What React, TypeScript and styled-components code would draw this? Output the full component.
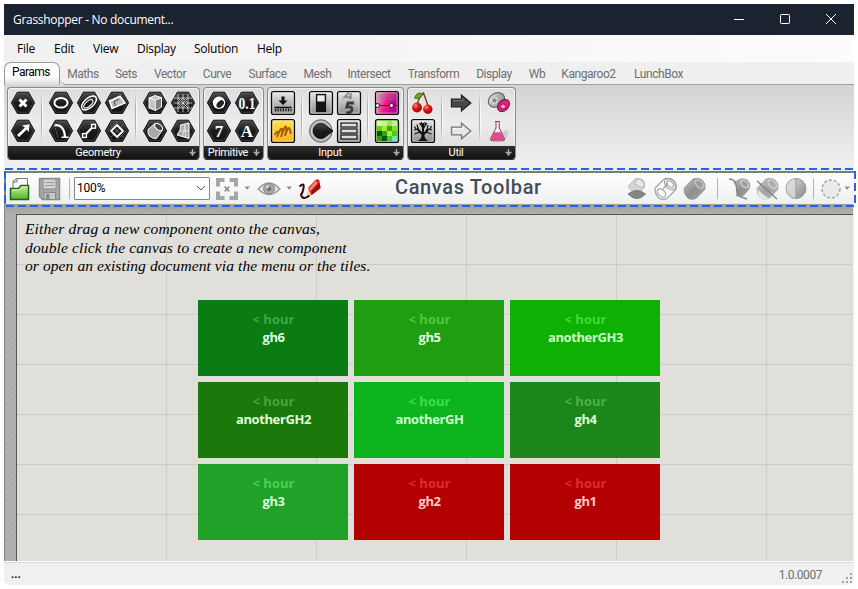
import React from 'react';
import styled, { createGlobalStyle } from 'styled-components';

const GlobalStyle = createGlobalStyle`
  *, *::before, *::after { box-sizing: border-box; }
  body { margin: 0; background: #fff; overflow: hidden; }
  svg { display: block; flex: none; }
`;

const ui = '"Open Sans", "Noto Sans", sans-serif';
const narrow = 'Roboto, "Liberation Sans", sans-serif';

const AppWindow = styled.div`
  width: 850px;
  height: 581px;
  margin: 4px;
  display: flex;
  flex-direction: column;
  background: #efefef;
  border-radius: 0 0 7px 7px;
  font-family: ${ui};
`;

const TitleBar = styled.header`
  height: 31px;
  flex: none;
  display: flex;
  align-items: center;
  justify-content: space-between;
  padding: 0 17px 0 9px;
  background: #1c2330;
  color: #fff;
`;

const Title = styled.span`
  font-size: 12px;
  letter-spacing: -0.3px;
  white-space: nowrap;
`;

const WindowControls = styled.div`
  display: flex;
  gap: 34px;
`;

const MenuBar = styled.nav`
  height: 27px;
  flex: none;
  display: flex;
  align-items: center;
  padding-left: 13px;
  gap: 19px;
  background: linear-gradient(90deg, #f0f0f0, #fcfcfc);
`;

const MenuItem = styled.span<{ $w: number }>`
  width: ${p => p.$w}px;
  font-size: 12px;
  letter-spacing: -0.25px;
  white-space: nowrap;
  color: #000;
`;

const TabStrip = styled.nav`
  height: 23px;
  flex: none;
  display: flex;
  align-items: stretch;
  background: #efefef;
`;

const ActiveTab = styled.div`
  width: 56px;
  flex: none;
  border: 1px solid #999;
  border-bottom: 0;
  border-radius: 7px 7px 0 0;
  background: linear-gradient(#fff 60%, #dcdcdc);
  font: 12px/19px ${narrow};
  letter-spacing: -0.5px;
  padding-right: 2px;
  text-align: center;
  color: #000;
`;

const TabLine = styled.div`
  flex: 1;
  display: flex;
  border-bottom: 1px solid #a0a0a0;
  border-bottom-left-radius: 6px;
`;

const Tab = styled.span<{ $w: number }>`
  width: ${p => p.$w}px;
  flex: none;
  font: 12px/24px ${narrow};
  letter-spacing: -0.45px;
  color: #707070;
  text-align: center;
  white-space: nowrap;
`;

const Ribbon = styled.section`
  height: 86px;
  flex: none;
  display: flex;
  align-items: flex-start;
  gap: 3px;
  padding: 2px 3px;
  background: linear-gradient(#d3d3d3, #efefef 78px);
`;

const Panel = styled.div`
  height: 73px;
  display: flex;
  flex-direction: column;
  border: 1px solid #8a8a8a;
  border-bottom-color: #333;
  border-radius: 4px;
  background: linear-gradient(#dedede, #ececec 50%, #d8d8d8);
  box-shadow: inset 0 0 0 1px #f3f3f3;
  overflow: hidden;
`;

const PanelBody = styled.div`
  height: 58px;
  display: flex;
  gap: 10px;
  padding: 1px 2px 0 1px;
`;

const IconGroup = styled.div<{ $cols: number; $divided: boolean }>`
  display: grid;
  grid-template-columns: repeat(${p => p.$cols}, 28px);
  grid-template-rows: 28px 28px;
  position: relative;
  &::before {
    content: '';
    display: ${p => (p.$divided ? 'block' : 'none')};
    position: absolute;
    left: -6px;
    top: 2px;
    width: 2px;
    height: 52px;
    background: linear-gradient(90deg, #b0b0b0 50%, #fafafa 50%);
    mask-image: linear-gradient(transparent, #000 30%, #000 70%, transparent);
  }
`;

const PanelLabel = styled.div`
  flex: 1;
  display: flex;
  align-items: center;
  padding: 0 2px 0 0;
  background: linear-gradient(#2e2e2e, #121212);
  color: #fff;
  font: 11px/13px ${narrow};
`;

const LabelText = styled.span`
  flex: 1;
  min-width: 0;
  text-align: center;
  letter-spacing: -0.3px;
`;

const ToolBar = styled.section`
  height: 33px;
  flex: none;
  display: flex;
  align-items: center;
  border-top: 2px solid #7b7b7b;
  border-left: 2px solid #888;
  background: linear-gradient(#fff, #efefef);
  position: relative;
`;

const ToolGroup = styled.div<{ $w: number }>`
  width: ${p => p.$w}px;
  flex: none;
  display: flex;
  align-items: center;
`;

const Divider = styled.i<{ $before: number; $after: number }>`
  width: 1px;
  height: 21px;
  margin: 0 ${p => p.$after}px 0 ${p => p.$before}px;
  background: #b4b4b4;
`;

const ZoomBox = styled.div`
  width: 136px;
  height: 23px;
  margin-right: 5px;
  display: flex;
  align-items: center;
  justify-content: space-between;
  padding: 0 3px 2px 2px;
  border: 1px solid #858585;
  border-radius: 1px;
  background: #fff;
  font: 12px ${narrow};
  letter-spacing: -0.2px;
  color: #000;
`;

const Heading = styled.h1`
  margin: 0;
  width: 230px;
  font: 500 20px/24px Roboto, sans-serif;
  letter-spacing: 0.62px;
  color: #434c59;
  padding-bottom: 3px;
  white-space: nowrap;
`;

const horizontalDash = 'repeating-linear-gradient(90deg, #2563eb 0 8px, transparent 8px 12px)';
const verticalDash = 'repeating-linear-gradient(#2563eb 0 8px, transparent 8px 12px)';

const Highlight = styled.div`
  position: absolute;
  inset: -5px -2px -3px -2px;
  pointer-events: none;
  background:
    ${horizontalDash} 1px 0 / 100% 2px no-repeat,
    ${horizontalDash} 2px 100% / 100% 2px no-repeat,
    ${verticalDash} 0 3px / 2px 100% no-repeat,
    ${verticalDash} 100% 3px / 2px 100% no-repeat;
`;

const Canvas = styled.main`
  height: 357px;
  flex: none;
  width: 849px;
  padding: 10px 0 0 11px;
  border-left: 1px solid #888;
  background:
    linear-gradient(rgba(90, 90, 85, 0.22), transparent 10px),
    repeating-linear-gradient(135deg, #b4b2ae 0 2px, #aeaca8 2px 4px);
  box-shadow: inset 1px 0 0 #aaa;
`;

const Paper = styled.div`
  height: 347px;
  display: flex;
  flex-direction: column;
  border-top: 1px solid #555;
  border-left: 1px solid #555;
  padding: 5px 0 0 8px;
  background:
    repeating-linear-gradient(90deg, transparent 0 149px, #cdccc7 149px 150px),
    repeating-linear-gradient(transparent 0 49px, #cdccc7 49px 50px),
    #e0dfda;
`;

const Hint = styled.p`
  margin: 0;
  height: 80px;
  font: italic 15.5px/18.6px "Liberation Serif", serif;
  color: #000;
`;

const HintLine = styled.span<{ $track: number }>`
  display: block;
  letter-spacing: ${p => p.$track}px;
  white-space: nowrap;
`;

const Tiles = styled.div`
  display: grid;
  grid-template-columns: repeat(3, 150px);
  grid-auto-rows: 76px;
  gap: 6px;
  margin-left: 173px;
`;

const Tile = styled.div<{ $bg: string }>`
  background: ${p => p.$bg};
  padding: 10px 0 0 1px;
  text-align: center;
  font: bold 13px/18px "Open Sans", "Noto Sans", sans-serif;
`;

const Age = styled.div<{ $fg: string }>`
  color: ${p => p.$fg};
`;

const FileName = styled.div<{ $fg: string }>`
  color: ${p => p.$fg};
  letter-spacing: -0.4px;
`;

const StatusBar = styled.footer`
  flex: 1;
  display: flex;
  align-items: center;
  justify-content: space-between;
  padding: 2px 1px 0 7px;
  border-top: 1px solid #fff;
  box-shadow: inset 0 1px 0 #d9d9d9;
  border-radius: 0 0 7px 7px;
  background: #f0f0f0;
`;

const StatusText = styled.span`
  font: bold 11px ${narrow};
  color: #001;
`;

const Version = styled.span`
  display: flex;
  gap: 18px;
  font: 12px/20px ${narrow};
  letter-spacing: -0.45px;
  color: #6e6e6e;
`;

const HiddenDefs = styled.svg`
  position: absolute;
`;

/* ---------- ribbon icons ---------- */

const Defs = () => (
  <HiddenDefs width="0" height="0">
    <defs>
      <linearGradient id="hex" x1="0" y1="0" x2="0" y2="1">
        <stop offset="0" stopColor="#4a4a4a" /><stop offset=".5" stopColor="#1c1c1c" /><stop offset="1" stopColor="#111" />
      </linearGradient>
      <linearGradient id="key" x1="0" y1="0" x2="0" y2="1">
        <stop offset="0" stopColor="#e9e9e9" /><stop offset="1" stopColor="#8c8c8c" />
      </linearGradient>
      <linearGradient id="amber" x1="0" y1="0" x2="0" y2="1">
        <stop offset="0" stopColor="#ffe14a" /><stop offset="1" stopColor="#ffb31a" />
      </linearGradient>
      <linearGradient id="pink" x1="0" y1="0" x2="1" y2="0.3">
        <stop offset="0" stopColor="#f0c4dc" /><stop offset=".55" stopColor="#f0188a" /><stop offset="1" stopColor="#b0009a" />
      </linearGradient>
      <linearGradient id="steel" x1="0" y1="0" x2="1" y2="1">
        <stop offset="0" stopColor="#e4e4e4" /><stop offset="1" stopColor="#858585" />
      </linearGradient>
      <linearGradient id="steelDark" x1="0" y1="0" x2="1" y2="1">
        <stop offset="0" stopColor="#c4c4c4" /><stop offset=".5" stopColor="#8e8e8e" /><stop offset="1" stopColor="#a9a9a9" />
      </linearGradient>
      <linearGradient id="folder" x1="0" y1="0" x2="0" y2="1">
        <stop offset="0" stopColor="#c5f08c" /><stop offset="1" stopColor="#4fb52e" />
      </linearGradient>
      <radialGradient id="cherry" cx=".35" cy=".3" r=".8">
        <stop offset="0" stopColor="#ff8a7a" /><stop offset=".4" stopColor="#e01818" /><stop offset="1" stopColor="#8a0000" />
      </radialGradient>
    </defs>
  </HiddenDefs>
);

type Kids = { children?: React.ReactNode };

const Hex = ({ children }: Kids) => (
  <svg width="28" height="28" viewBox="0 0 28 28" fill="none">
    <path d="M8.4 3.2H19.6L25.6 13.8L19.6 24.4H8.4L2.4 13.8Z" fill="url(#hex)" stroke="#111" strokeWidth="1" strokeLinejoin="round" />
    <path d="M8.9 4.4H19.1L24.3 13.8L19.1 23.2H8.9L3.7 13.8Z" stroke="#5a5a5a" strokeWidth=".6" />
    {children}
  </svg>
);

const Key = ({ fill = 'url(#key)', children }: Kids & { fill?: string }) => (
  <svg width="28" height="28" viewBox="0 0 28 28" fill="none">
    <rect x="2.6" y="2.6" width="22.8" height="22.8" rx="2" fill={fill} stroke="#0b0b0b" strokeWidth="1.4" />
    <rect x="3.9" y="3.9" width="20.2" height="20.2" stroke="#fff" strokeOpacity=".6" strokeWidth=".8" />
    {children}
  </svg>
);

const w = { stroke: '#fff', strokeWidth: 1.6 };

const PointIcon = () => <Hex><path d="M10.5 10.5l7 7m0-7l-7 7" stroke="#fff" strokeWidth="3" /></Hex>;
const VectorIcon = () => <Hex><path d="M8 18L16 10.5L13 8.6L20.6 7.2L19.7 15L17.8 12.5L10 20Z" fill="#fff" /></Hex>;
const CircleIcon = () => <Hex><ellipse cx="14" cy="13.8" rx="6.6" ry="4.8" stroke="#fff" strokeWidth="2" /></Hex>;
const ArcIcon = () => <Hex><path d="M7.5 8.5C14 7 17.5 12 18 20" {...w} strokeWidth={2.2} /><path d="M14.5 20.2h7" {...w} /><path d="M7.8 9L11 21" stroke="#777" strokeDasharray="1 1" /></Hex>;
const EllipseIcon = () => (
  <Hex><g transform="rotate(-42 14 14)"><ellipse cx="14" cy="14" rx="9" ry="4.8" {...w} strokeWidth={1.5} /><ellipse cx="13" cy="14.2" rx="5.6" ry="2.6" stroke="#eee" strokeWidth="1.2" /></g></Hex>
);
const LineIcon = () => <Hex><path d="M10 18L18 9.8" {...w} strokeWidth={2} /><rect x="7.6" y="16.6" width="3.8" height="3.8" fill="#222" {...w} strokeWidth={1.4} /><rect x="16.6" y="7.4" width="3.8" height="3.8" fill="#222" {...w} strokeWidth={1.4} /></Hex>;
const PlaneIcon = () => <Hex><path d="M6.5 12L17 7.2L22 14L9 19.5Z" fill="#bdbdbd" stroke="#fff" strokeWidth="1.6" /><path d="M12.5 17L11 12.5L16 10" stroke="#444" /></Hex>;
const RectIcon = () => <Hex><path d="M8 8l12 12M20 8L8 20M5 14l9-9M14 23l9-9" stroke="#777" strokeWidth=".8" /><path d="M14 8L20 14L14 20L8 14Z" {...w} strokeWidth={1.8} /></Hex>;
const BoxIcon = () => <Hex><path d="M8 9L14 6.5L20.5 8.6V18L14.5 21.5L8 19Z" fill="#c4c4c4" stroke="#fff" /><path d="M8 9L14.5 11.2V21.5M14.5 11.2L20.5 8.6" stroke="#fff" /><path d="M14.8 11.5L20 9.5V17.8L14.8 21Z" fill="#808080" /></Hex>;
const CylinderIcon = () => <Hex><path d="M7 12.5L14 6.5L21.5 13L15.5 21.5Q11.5 22 8.5 19Q6.4 16 7 12.5Z" fill="#a8a8a8" stroke="#fff" /><ellipse cx="17.6" cy="10" rx="4.6" ry="2.7" transform="rotate(40 17.6 10)" fill="#444" stroke="#fff" /></Hex>;
const MeshIcon = () => <Hex><path d="M9 5V23M14 5V23M19 5V23M5 9H23M5 14H23M5 19H23M9 9L19 19M19 9L9 19M14 9L19 14L14 19L9 14Z" stroke="#ddd" strokeWidth=".8" /></Hex>;
const SurfaceIcon = () => <Hex><path d="M8 18Q12.5 13 11.5 8L20 6V21.5Z" fill="#aaa" stroke="#fff" /><path d="M15.5 7Q16 14 13 20M10.5 14L20 14M15.5 7Q17 14 16.5 20.5" stroke="#eee" strokeWidth=".8" /></Hex>;
const BoolIcon = () => <Hex><circle cx="14" cy="13.8" r="6.2" fill="#fff" /><ellipse cx="15.2" cy="15" rx="4.4" ry="2.8" transform="rotate(-45 15.2 15)" fill="#222" /></Hex>;

const Glyph = styled.text`
  font: bold 17px "Liberation Serif", serif;
  fill: #fff;
  text-anchor: middle;
`;

const NumberIcon = () => <Hex><Glyph x="14" y="19.5" textLength="17" lengthAdjust="spacingAndGlyphs">0.1</Glyph></Hex>;
const IntegerIcon = () => <Hex><Glyph x="14" y="19.5">7</Glyph></Hex>;
const TextIcon = () => <Hex><Glyph x="14" y="19.5">A</Glyph></Hex>;

const ButtonIcon = () => <Key><path d="M12.5 7.5h3v4h3L14 16L9.5 11.5h3Z" fill="#111" /><path d="M5.5 18.5h17" stroke="#111" strokeWidth="1.6" /><path d="M6 21h16.5" stroke="#111" strokeWidth="2.6" strokeDasharray="1.2 1.4" /></Key>;
const GraphIcon = () => <Key fill="url(#amber)"><path d="M5.5 18Q8 14 9 15T8 20Q12 10 13 12T12 20Q16 8 17 9.5T16 19Q19 10 20 11T22 17" stroke="#a85a00" strokeWidth="1.9" /></Key>;
const ToggleIcon = () => <Key><rect x="9.6" y="5.6" width="8.8" height="16.8" fill="#eee" stroke="#111" strokeWidth="1.4" /><rect x="10" y="12.5" width="8" height="9.5" fill="#151515" /></Key>;
const KnobIcon = () => <svg width="28" height="28" fill="none"><circle cx="13.8" cy="14" r="11.3" fill="#a6a6a6" stroke="#666" /><circle cx="13.8" cy="14" r="9.4" stroke="#e0e0e0" strokeWidth=".8" /><path d="M26 14L18.8 19.4A7.4 7.4 0 1 1 18.8 8.6Z" fill="url(#hex)" stroke="#111" /></svg>;
const DigitIcon = () => <Key><path d="M14 3.5L9.5 8.2H17M16 4L15 10.5" stroke="#8e8e8e" strokeWidth="2" /><path d="M19 14H13L11.8 18Q17.5 17 17 20.5T11 24" stroke="#3c3c3c" strokeWidth="2.8" /></Key>;
const ListIcon = () => <Key><g fill="#ddd" stroke="#1a1a1a" strokeWidth="1.2"><rect x="6" y="6" width="16" height="4" /><rect x="6" y="12" width="16" height="4" /><rect x="6" y="18" width="16" height="4" /></g></Key>;
const GradientIcon = () => <Key fill="url(#pink)"><rect x="4" y="4" width="20" height="7" fill="#888" opacity=".3" /><path d="M4 16.5h20" stroke="#501040" strokeWidth="1.2" /><circle cx="4.5" cy="16.5" r="2" fill="#fff" stroke="#111" /><circle cx="18.5" cy="16.5" r="2" fill="#fff" stroke="#111" /></Key>;

const pixelRows = [
  ['#d9f5a8', '#c6ee8a', '#96e65a', '#c4ed9c'],
  ['#64cf12', '#9bef2c', '#4aa01d', '#7ddf22'],
  ['#154f08', '#2aa41b', '#a1f61c', '#48c820'],
  ['#329a28', '#075c0c', '#48c838', '#72e6a8'],
];
const ImageIcon = () => (
  <Key fill="#7bd427">
    {pixelRows.flatMap((r, y) => r.map((c, x) => <rect key={`${x}-${y}`} x={4 + x * 5} y={4 + y * 5} width="5" height="5" fill={c} />))}
  </Key>
);
const CherryIcon = () => <svg width="28" height="28" fill="none"><path d="M8 17Q9 9 14.5 4Q17 10 19.5 19" stroke="#7b3a16" strokeWidth="1.4" /><path d="M14 5Q8 2 5.5 9Q11 11 14 5Z" fill="#6fae1d" stroke="#32720e" /><circle cx="8" cy="18.5" r="4.9" fill="url(#cherry)" /><circle cx="18.8" cy="20.2" r="4.7" fill="url(#cherry)" /></svg>;
const TreeIcon = () => <Key><g stroke="#111"><path d="M14 18L8.5 12M14 18L19.5 12M14 17V6" strokeWidth="2" /><path d="M8.5 12L5 13M9.5 13L8 7.5M11 15L5.5 17M14 11L10.5 6M14 12L18 6M18 13.5L19 8M19.5 12L23 13M17 15L22.5 17M12 9L12.5 5M16 9V5M7 12L5.5 9.5M21 12L22.5 9" strokeWidth="1.2" /></g><path d="M8.5 24Q13 22 12.8 17H15.2Q15 22 19.5 24Z" fill="#111" /></Key>;
const ArrowIcon = ({ dark = false }) => <svg width="28" height="28"><path d="M4.5 10.2H14.5V6.2L23.8 14L14.5 21.8V17.8H4.5Z" fill={dark ? '#484848' : '#e6e6e6'} stroke={dark ? '#222' : '#777'} strokeWidth="1.3" /><path d="M6 11.7H16V9.5" stroke={dark ? '#888' : '#fff'} fill="none" strokeWidth=".8" /></svg>;
const BeansIcon = () => <svg width="28" height="28"><ellipse cx="11.5" cy="11" rx="8.6" ry="6.8" transform="rotate(-30 11.5 11)" fill="url(#steel)" stroke="#555" /><circle cx="9.5" cy="11.5" r="2.8" fill="#8a8a8a" stroke="#f2f2f2" /><ellipse cx="18.5" cy="16.5" rx="6.8" ry="5" transform="rotate(-45 18.5 16.5)" fill="#dd2378" stroke="#741040" /><circle cx="18" cy="17.5" r="2.5" fill="#f9a8ce" stroke="#a3104d" /></svg>;
const FlaskIcon = () => <svg width="28" height="28"><path d="M17 15L23 13Q24 20 19 23Z" fill="#ccc" /><path d="M10 4.5H15M11 5V11L5.5 21.5Q5 23.8 7.5 23.8H17.8Q20.2 23.8 19.5 21.5L14.2 11V5" fill="#f7f0f3" stroke="#884060" /><path d="M9 15.2H16.2L19.2 21.8Q19.3 23.4 17.6 23.4H7.5Q5.7 23.2 6 21.6Z" fill="#e24b8b" /></svg>;

const PlusIcon = () => <svg width="9" height="9"><path d="M4.5 1V7.5M1.5 4.5H7.5" stroke="#aaa" strokeWidth="1.4" fill="none" /><path d="M2.5 5.5H6.5L4.5 8Z" fill="#aaa" /></svg>;

type Icon = React.ComponentType;
const DarkArrow = () => <ArrowIcon dark />;

/* Every group lists its icons row by row. */
const panels: { label: string; groups: Icon[][] }[] = [
  { label: 'Geometry', groups: [[PointIcon, VectorIcon], [CircleIcon, EllipseIcon, PlaneIcon, ArcIcon, LineIcon, RectIcon], [BoxIcon, MeshIcon, CylinderIcon, SurfaceIcon]] },
  { label: 'Primitive', groups: [[BoolIcon, NumberIcon, IntegerIcon, TextIcon]] },
  { label: 'Input', groups: [[ButtonIcon, GraphIcon], [ToggleIcon, DigitIcon, KnobIcon, ListIcon], [GradientIcon, ImageIcon]] },
  { label: 'Util', groups: [[CherryIcon, TreeIcon], [DarkArrow, ArrowIcon as Icon], [BeansIcon, FlaskIcon]] },
];

/* ---------- toolbar icons ---------- */

const Sized = styled.svg<{ $ml?: number }>`
  margin-left: ${p => p.$ml ?? 0}px;
`;

const OpenIcon = () => <Sized $ml={3} width="22" height="24" fill="none"><path d="M4 11V4L8 1.5H18.5V9" fill="#fafafa" stroke="#777" /><path d="M4 5H8V1.5" stroke="#777" /><path d="M1.5 22.5V11.5H9.5L12 8.5H19.5V22.5Z" fill="url(#folder)" stroke="#17651e" strokeWidth="1.5" /><path d="M3 13H10L13 10H18.5" stroke="#e0f8b8" /></Sized>;
const SaveIcon = () => <Sized $ml={7} width="23" height="24" fill="none"><path d="M1.5 1.5H21.5V22.5H4.5L1.5 19.5Z" fill="#a8a8a8" stroke="#8c8c8c" strokeWidth="1.5" /><rect x="5" y="2" width="13" height="10" fill="#d4d4d4" stroke="#8c8c8c" /><path d="M7 5.5H16M7 8.5H16" stroke="#999" /><rect x="6" y="15.5" width="11.5" height="7" fill="#c8c8c8" stroke="#888" /><rect x="8" y="17" width="3.5" height="5" fill="#888" /></Sized>;
const Caret = ({ ml = 0 }) => <Sized $ml={ml} width="7" height="5"><path d="M.5 .5H6L3.2 3.8Z" fill="#8e8e8e" /></Sized>;
const FocusIcon = () => <svg width="24" height="24" fill="none"><path d="M3 9.5V3H9.5M14.5 3H21V9.5M21 14.5V21H14.5M9.5 21H3V14.5" stroke="#a6a6a6" strokeWidth="4" /><path d="M9.7 9.7L14.3 14.3M14.3 9.7L9.7 14.3" stroke="#909090" strokeWidth="1.8" /></svg>;
const EyeIcon = () => <Sized $ml={6} width="24" height="20" fill="none"><path d="M1.2 10Q12 -2 22.8 10Q12 21 1.2 10Z" fill="#e5e5e5" stroke="#9a9a9a" strokeWidth="1.5" /><circle cx="12" cy="9.7" r="5.4" fill="#a9a9a9" stroke="#868686" /><circle cx="12" cy="9.7" r="2.3" fill="#707070" /><circle cx="10.5" cy="8" r="1.2" fill="#eee" /></Sized>;
const SketchIcon = () => (
  <Sized $ml={5} width="24" height="24" fill="none">
    <path d="M10 11L18 2.5Q21 1.5 21.5 4L22.5 11L13 18.5Z" fill="#d91f1f" />
    <path d="M11 11.5L18 3.8L19.5 6L12.5 14Z" fill="#ff8673" />
    <path d="M14.5 17.5L22.5 11L21.5 6L13.5 14Z" fill="#9d1010" />
    <path d="M10 11L13 18.5L8.5 20.5Z" fill="#f3d2ae" />
    <path d="M1.5 9.5Q6.5 5 5.6 10.5T3 17.5Q4.5 24 11.5 18.5" stroke="#3a0808" strokeWidth="2" />
  </Sized>
);

const tube = 'M1.3 11L10 2Q15 .3 19 3Q23.3 7 21.8 12.5L13.5 21Q10 23.5 5.5 21.5Q.2 17 1.3 11Z';
const CapIcon = () => <svg width="24" height="24" fill="none"><path d="M3.5 9L10 2Q14 .5 18 3Q20.5 6 19.5 10L16 14H7Q3.5 12 3.5 9Z" fill="#d4d4d4" stroke="#bdbdbd" /><ellipse cx="14.8" cy="6.2" rx="4.8" ry="3.4" transform="rotate(43 14.8 6.2)" fill="#e8e8e8" stroke="#b8b8b8" /><path d="M3 17Q12 10 20.5 17Q12 26 3 17Z" fill="#868686" stroke="#777" /></svg>;
const WireIcon = () => <svg width="24" height="24" fill="none" stroke="#a2a2a2" strokeWidth="1.2"><path d={tube} fill="#fafafa" /><ellipse cx="16.2" cy="7.2" rx="6.6" ry="4.6" transform="rotate(43 16.2 7.2)" /><ellipse cx="16.2" cy="7.2" rx="4" ry="2.6" transform="rotate(43 16.2 7.2)" /><ellipse cx="7.5" cy="16" rx="5" ry="3.2" transform="rotate(43 7.5 16)" /><path d="M9 12L14 6.5" /></svg>;
const ShadedTube = () => <><path d={tube} fill="url(#steelDark)" stroke="#9a9a9a" /><ellipse cx="16.4" cy="7" rx="6.3" ry="4.2" transform="rotate(43 16.4 7)" fill="#c6c6c6" stroke="#a2a2a2" /><ellipse cx="16.4" cy="7" rx="4" ry="2.4" transform="rotate(43 16.4 7)" fill="#9c9c9c" /></>;
const ShadedIcon = () => <svg width="24" height="24" fill="none"><ShadedTube /></svg>;
const CurveTubeIcon = () => <svg width="24" height="24" fill="none"><path d="M9 3Q18 -1 21.5 6Q24 10 19 15L14 20.5L8 19Q10 11 5 5Z" fill="url(#steelDark)" /><ellipse cx="16.5" cy="7" rx="5.8" ry="4" transform="rotate(43 16.5 7)" fill="#cacaca" stroke="#a2a2a2" /><ellipse cx="16.5" cy="7" rx="3.4" ry="2" transform="rotate(43 16.5 7)" fill="#9c9c9c" /><path d="M1 2Q8 2 8.5 10Q8 20 19 22" stroke="#888" strokeWidth="1.3" /></svg>;
const CutTubeIcon = () => <svg width="24" height="24" fill="none" opacity=".8"><ShadedTube /><path d="M2 13L13 22Q9 24 5 21.5Q.5 17 2 13Z" fill="#e4e4e4" /><path d="M1 4L21 22" stroke="#666" strokeWidth="1.4" /></svg>;
const SphereIcon = () => <svg width="24" height="24"><circle cx="12" cy="11.5" r="10" fill="url(#steel)" stroke="#999" /><path d="M12 2A9.5 9.5 0 0 0 12 21Z" fill="#e0e0e0" opacity=".7" /><path d="M12 2V21" stroke="#999" /></svg>;
const DashedIcon = () => <svg width="22" height="22"><circle cx="11" cy="11" r="9" fill="#eaeaea" stroke="#9c9c9c" strokeWidth="1.3" strokeDasharray="3 2" /></svg>;
const Gap = styled.i<{ $w: number }>`
  width: ${p => p.$w}px;
  flex: none;
`;

const menus: [string, number][] = [['File', 18], ['Edit', 20], ['View', 25], ['Display', 38], ['Solution', 44], ['Help', 26]];
const tabs: [string, number][] = [
  ['Maths', 46], ['Sets', 40], ['Vector', 48], ['Curve', 46], ['Surface', 55], ['Mesh', 45], ['Intersect', 58],
  ['Transform', 71], ['Display', 50], ['Wb', 36], ['Kangaroo2', 67], ['LunchBox', 73],
];
const tiles: [string, string, string, string][] = [
  ['gh6', '#0b7c14', '#3aaa43', '#dcffe0'],
  ['gh5', '#1f9e12', '#4dcb40', '#e2ffdf'],
  ['anotherGH3', '#0fb004', '#3ddd33', '#c8ffc5'],
  ['anotherGH2', '#1b780a', '#49a638', '#e2ffdb'],
  ['anotherGH', '#0db41c', '#3be049', '#cfffd3'],
  ['gh4', '#1c861a', '#4ab448', '#dfffde'],
  ['gh3', '#1fa227', '#4dd055', '#dcffde'],
  ['gh2', '#b30000', '#de2d2d', '#ffcccc'],
  ['gh1', '#b30000', '#de2d2d', '#ffcccc'],
];
const hints: [string, number][] = [
  ['Either drag a new component onto the canvas,', 0.13],
  ['double click the canvas to create a new component', 0.13],
  ['or open an existing document via the menu or the tiles.', 0.09],
];

export default function App() {
  return (
    <>
      <GlobalStyle />
      <Defs />
      <AppWindow>
        <TitleBar>
          <Title>Grasshopper - No document...</Title>
          <WindowControls>
            <svg width="12" height="12"><path d="M1 5.5H11" stroke="#fff" /></svg>
            <svg width="12" height="12"><rect x="1.5" y=".5" width="9" height="9" rx=".8" fill="none" stroke="#fff" /></svg>
            <svg width="12" height="12"><path d="M1 0L11 10M11 0L1 10" stroke="#fff" /></svg>
          </WindowControls>
        </TitleBar>
        <MenuBar>
          {menus.map(([m, width]) => <MenuItem key={m} $w={width}>{m}</MenuItem>)}
        </MenuBar>
        <TabStrip>
          <ActiveTab>Params</ActiveTab>
          <TabLine>
            {tabs.map(([t, width]) => <Tab key={t} $w={width}>{t}</Tab>)}
          </TabLine>
        </TabStrip>
        <Ribbon>
          {panels.map(p => (
            <Panel key={p.label}>
              <PanelBody>
                {p.groups.map((icons, g) => (
                  <IconGroup key={g} $cols={icons.length / 2} $divided={g > 0}>
                    {icons.map((I, i) => <I key={i} />)}
                  </IconGroup>
                ))}
              </PanelBody>
              <PanelLabel><LabelText>{p.label}</LabelText><PlusIcon /></PanelLabel>
            </Panel>
          ))}
        </Ribbon>
        <ToolBar>
          <ToolGroup $w={389}>
            <OpenIcon />
            <SaveIcon />
            <Divider $before={8} $after={4} />
            <ZoomBox>
              100%
              <svg width="10" height="6"><path d="M1 1L5 5L9 1" fill="none" stroke="#555" /></svg>
            </ZoomBox>
            <FocusIcon />
            <Caret ml={5} />
            <EyeIcon />
            <Caret ml={5} />
            <SketchIcon />
          </ToolGroup>
          <Heading>Canvas Toolbar</Heading>
          <ToolGroup $w={229}>
            <CapIcon />
            <Gap $w={5} />
            <WireIcon />
            <Gap $w={5} />
            <ShadedIcon />
            <Divider $before={10} $after={10} />
            <CurveTubeIcon />
            <Gap $w={4} />
            <CutTubeIcon />
            <Gap $w={4} />
            <SphereIcon />
            <Divider $before={5} $after={6} />
            <DashedIcon />
            <Caret ml={2} />
          </ToolGroup>
          <Highlight />
        </ToolBar>
        <Canvas>
          <Paper>
            <Hint>
              {hints.map(([h, track]) => <HintLine key={h} $track={track}>{h}</HintLine>)}
            </Hint>
            <Tiles>
              {tiles.map(([name, bg, age, fg]) => (
                <Tile key={name} $bg={bg}>
                  <Age $fg={age}>&lt; hour</Age>
                  <FileName $fg={fg}>{name}</FileName>
                </Tile>
              ))}
            </Tiles>
          </Paper>
        </Canvas>
        <StatusBar>
          <StatusText>...</StatusText>
          <Version>
            1.0.0007
            <svg width="13" height="20">
              {[[10, 8], [6, 12], [10, 12], [2, 16], [6, 16], [10, 16]].map(([x, y]) => (
                <rect key={`${x}-${y}`} x={x} y={y} width="2" height="2" fill="#a0a0a0" />
              ))}
            </svg>
          </Version>
        </StatusBar>
      </AppWindow>
    </>
  );
}
